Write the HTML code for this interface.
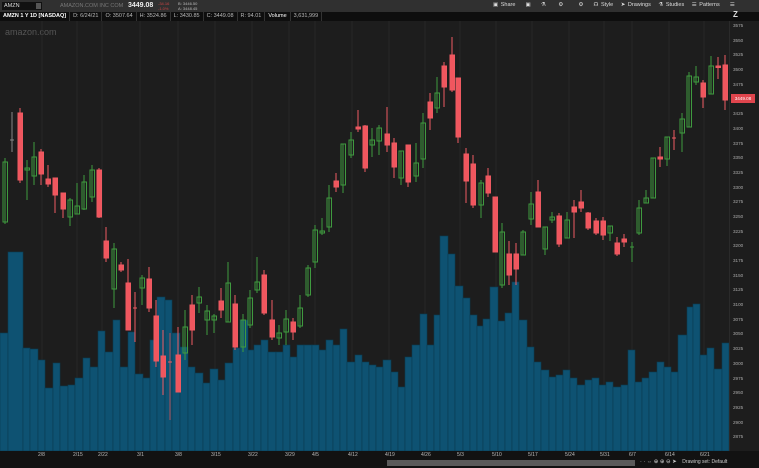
<!DOCTYPE html>
<html><head><meta charset="utf-8"><style>
*{margin:0;padding:0;box-sizing:border-box}
body{width:759px;height:468px;background:#1d1d1d;overflow:hidden;font-family:"Liberation Sans",sans-serif;position:relative}
.top{position:absolute;left:0;top:0;width:759px;height:12px;background:#303030;color:#ccc;font-size:6px}
.row2{position:absolute;left:0;top:12px;width:759px;height:9px;background:#0e0e0e;font-size:5.5px;color:#bbb}
.row2 span{display:inline-block;padding:0 3px;border-right:1px solid #333;line-height:9px}
.ax{position:absolute;left:729px;top:21px;width:30px;height:430px;background:#1d1d1d;border-left:1px solid #2a2a2a}
.bot{position:absolute;left:0;top:451px;width:759px;height:17px;background:#121212}
</style></head><body>
<div class="top">
<div style="position:absolute;left:2px;top:2px;width:40px;height:8px;background:#111;color:#ddd;font-size:5.5px;line-height:8px;padding-left:2px">AMZN<span style="position:absolute;right:1px;top:1px;width:5px;height:6px;background:#555"></span></div>
<div style="position:absolute;left:60px;top:3px;font-size:5.5px;color:#777">AMAZON.COM INC COM</div>
<div style="position:absolute;left:128px;top:2px;font-size:7px;font-weight:bold;color:#eee">3449.08</div>
<div style="position:absolute;left:158px;top:1px;font-size:4px;color:#c44;line-height:5px">-34.16<br>-1.0%</div>
<div style="position:absolute;left:178px;top:1px;font-size:4px;color:#bbb;line-height:5px">B: 3446.50<br>A: 3448.45</div>
<div style="position:absolute;left:493px;top:2px;font-size:5.5px;color:#ddd;word-spacing:1px">▣ Share &nbsp;&nbsp; ▣ &nbsp;&nbsp; ⚗ &nbsp;&nbsp;&nbsp; ⚙ &nbsp;&nbsp;&nbsp;&nbsp; ⚙ &nbsp;&nbsp; ☊ Style &nbsp; ➤ Drawings &nbsp; ⚗ Studies &nbsp; ☰ Patterns &nbsp;&nbsp; ☰</div>
</div>
<div class="row2"><span style="font-weight:bold;color:#fff">AMZN 1 Y 1D [NASDAQ]</span><span>D: 6/24/21</span><span>O: 3507.64</span><span>H: 3524.86</span><span>L: 3430.85</span><span>C: 3449.08</span><span>R: 94.01</span><span style="color:#fff">Volume</span><span>3,631,999</span></div>
<div style="position:absolute;left:5px;top:27px;font-size:9px;color:#555">amazon.com</div>
<svg style="position:absolute;left:0;top:0" width="759" height="468">
<g stroke="#262626" stroke-width="1">
<line x1="42" y1="21" x2="42" y2="451"/><line x1="77" y1="21" x2="77" y2="451"/><line x1="102" y1="21" x2="102" y2="451"/><line x1="140" y1="21" x2="140" y2="451"/><line x1="178" y1="21" x2="178" y2="451"/><line x1="215" y1="21" x2="215" y2="451"/><line x1="252" y1="21" x2="252" y2="451"/><line x1="289" y1="21" x2="289" y2="451"/><line x1="315" y1="21" x2="315" y2="451"/><line x1="352" y1="21" x2="352" y2="451"/><line x1="389" y1="21" x2="389" y2="451"/><line x1="425" y1="21" x2="425" y2="451"/><line x1="460" y1="21" x2="460" y2="451"/><line x1="496" y1="21" x2="496" y2="451"/><line x1="532" y1="21" x2="532" y2="451"/><line x1="569" y1="21" x2="569" y2="451"/><line x1="604" y1="21" x2="604" y2="451"/><line x1="632" y1="21" x2="632" y2="451"/><line x1="669" y1="21" x2="669" y2="451"/><line x1="704" y1="21" x2="704" y2="451"/>
</g>
<g fill="#0e5272" stroke="#0a3c52" stroke-width="0.6">
<rect x="0" y="333" width="8" height="118"/><rect x="8" y="252" width="15" height="199"/><rect x="23" y="348" width="7" height="103"/><rect x="30" y="349" width="8" height="102"/><rect x="38" y="360" width="7" height="91"/><rect x="45" y="388" width="8" height="63"/><rect x="53" y="363" width="7" height="88"/><rect x="60" y="386" width="8" height="65"/><rect x="68" y="385" width="7" height="66"/><rect x="75" y="378" width="8" height="73"/><rect x="83" y="358" width="7" height="93"/><rect x="90" y="367" width="8" height="84"/><rect x="98" y="331" width="7" height="120"/><rect x="105" y="352" width="8" height="99"/><rect x="113" y="320" width="7" height="131"/><rect x="120" y="367" width="8" height="84"/><rect x="128" y="332" width="7" height="119"/><rect x="135" y="374" width="8" height="77"/><rect x="143" y="378" width="7" height="73"/><rect x="150" y="340" width="7" height="111"/><rect x="157" y="297" width="8" height="154"/><rect x="165" y="300" width="7" height="151"/><rect x="172" y="333" width="8" height="118"/><rect x="180" y="347" width="8" height="104"/><rect x="188" y="367" width="7" height="84"/><rect x="195" y="373" width="8" height="78"/><rect x="203" y="383" width="7" height="68"/><rect x="210" y="369" width="8" height="82"/><rect x="218" y="380" width="7" height="71"/><rect x="225" y="363" width="8" height="88"/><rect x="233" y="348" width="7" height="103"/><rect x="240" y="320" width="8" height="131"/><rect x="248" y="350" width="6" height="101"/><rect x="254" y="345" width="7" height="106"/><rect x="261" y="340" width="7" height="111"/><rect x="268" y="352" width="8" height="99"/><rect x="276" y="352" width="7" height="99"/><rect x="283" y="345" width="7" height="106"/><rect x="290" y="357" width="7" height="94"/><rect x="297" y="345" width="7" height="106"/><rect x="304" y="345" width="8" height="106"/><rect x="312" y="345" width="7" height="106"/><rect x="319" y="350" width="7" height="101"/><rect x="326" y="340" width="7" height="111"/><rect x="333" y="345" width="7" height="106"/><rect x="340" y="329" width="7" height="122"/><rect x="347" y="362" width="8" height="89"/><rect x="355" y="355" width="7" height="96"/><rect x="362" y="362" width="7" height="89"/><rect x="369" y="365" width="7" height="86"/><rect x="376" y="367" width="7" height="84"/><rect x="383" y="360" width="8" height="91"/><rect x="391" y="372" width="7" height="79"/><rect x="398" y="387" width="7" height="64"/><rect x="405" y="357" width="7" height="94"/><rect x="412" y="345" width="8" height="106"/><rect x="420" y="314" width="7" height="137"/><rect x="427" y="345" width="7" height="106"/><rect x="434" y="315" width="6" height="136"/><rect x="440" y="236" width="8" height="215"/><rect x="448" y="254" width="7" height="197"/><rect x="455" y="286" width="8" height="165"/><rect x="463" y="298" width="7" height="153"/><rect x="470" y="315" width="7" height="136"/><rect x="477" y="326" width="6" height="125"/><rect x="483" y="319" width="7" height="132"/><rect x="490" y="287" width="8" height="164"/><rect x="498" y="321" width="7" height="130"/><rect x="505" y="313" width="7" height="138"/><rect x="512" y="282" width="7" height="169"/><rect x="519" y="320" width="8" height="131"/><rect x="527" y="347" width="7" height="104"/><rect x="534" y="362" width="7" height="89"/><rect x="541" y="370" width="8" height="81"/><rect x="549" y="377" width="7" height="74"/><rect x="556" y="375" width="7" height="76"/><rect x="563" y="370" width="7" height="81"/><rect x="570" y="378" width="7" height="73"/><rect x="577" y="385" width="8" height="66"/><rect x="585" y="380" width="7" height="71"/><rect x="592" y="378" width="7" height="73"/><rect x="599" y="385" width="7" height="66"/><rect x="606" y="382" width="7" height="69"/><rect x="613" y="387" width="8" height="64"/><rect x="621" y="385" width="7" height="66"/><rect x="628" y="350" width="7" height="101"/><rect x="635" y="382" width="7" height="69"/><rect x="642" y="378" width="7" height="73"/><rect x="649" y="372" width="8" height="79"/><rect x="657" y="362" width="7" height="89"/><rect x="664" y="367" width="7" height="84"/><rect x="671" y="372" width="7" height="79"/><rect x="678" y="335" width="9" height="116"/><rect x="687" y="307" width="6" height="144"/><rect x="693" y="304" width="7" height="147"/><rect x="700" y="355" width="7" height="96"/><rect x="707" y="348" width="7" height="103"/><rect x="714" y="369" width="8" height="82"/><rect x="722" y="343" width="7" height="108"/>
</g>
<g stroke-width="1">
<g stroke="#3f9a3f" fill="none">
<line x1="5" y1="158" x2="5" y2="224"/><rect x="3" y="162" width="4.5" height="60"/>
<line x1="27" y1="160" x2="27" y2="200"/><rect x="25" y="168" width="4.5" height="2"/>
<line x1="34" y1="142" x2="34" y2="185"/><rect x="32" y="157" width="4.5" height="19"/>
<line x1="70" y1="198" x2="70" y2="226"/><rect x="68" y="200" width="4.5" height="17"/>
<line x1="77" y1="183" x2="77" y2="214"/><rect x="75" y="206" width="4.5" height="8"/>
<line x1="84" y1="175" x2="84" y2="210"/><rect x="82" y="182" width="4.5" height="27"/>
<line x1="92" y1="165" x2="92" y2="202"/><rect x="90" y="170" width="4.5" height="27"/>
<line x1="114" y1="243" x2="114" y2="308"/><rect x="112" y="249" width="4.5" height="40"/>
<line x1="142" y1="275" x2="142" y2="305"/><rect x="140" y="278" width="4.5" height="10"/>
<line x1="185" y1="310" x2="185" y2="360"/><rect x="183" y="327" width="4.5" height="26"/>
<line x1="199" y1="287" x2="199" y2="313"/><rect x="197" y="297" width="4.5" height="6"/>
<line x1="207" y1="305" x2="207" y2="335"/><rect x="205" y="311" width="4.5" height="9"/>
<line x1="214" y1="314" x2="214" y2="333"/><rect x="212" y="316" width="4.5" height="4"/>
<line x1="228" y1="262" x2="228" y2="322"/><rect x="226" y="283" width="4.5" height="39"/>
<line x1="243" y1="314" x2="243" y2="352"/><rect x="241" y="320" width="4.5" height="27"/>
<line x1="250" y1="290" x2="250" y2="328"/><rect x="248" y="298" width="4.5" height="27"/>
<line x1="257" y1="257" x2="257" y2="293"/><rect x="255" y="282" width="4.5" height="8"/>
<line x1="279" y1="325" x2="279" y2="345"/><rect x="277" y="333" width="4.5" height="5"/>
<line x1="286" y1="310" x2="286" y2="345"/><rect x="284" y="319" width="4.5" height="13"/>
<line x1="300" y1="295" x2="300" y2="328"/><rect x="298" y="308" width="4.5" height="18"/>
<line x1="308" y1="265" x2="308" y2="297"/><rect x="306" y="268" width="4.5" height="27"/>
<line x1="315" y1="225" x2="315" y2="268"/><rect x="313" y="230" width="4.5" height="32"/>
<line x1="322" y1="218" x2="322" y2="235"/><rect x="320" y="231" width="4.5" height="2"/>
<line x1="329" y1="185" x2="329" y2="232"/><rect x="327" y="198" width="4.5" height="29"/>
<line x1="343" y1="144" x2="343" y2="193"/><rect x="341" y="144" width="4.5" height="41"/>
<line x1="351" y1="132" x2="351" y2="158"/><rect x="349" y="140" width="4.5" height="15"/>
<line x1="372" y1="128" x2="372" y2="157"/><rect x="370" y="140" width="4.5" height="5"/>
<line x1="379" y1="125" x2="379" y2="155"/><rect x="377" y="128" width="4.5" height="13"/>
<line x1="401" y1="151" x2="401" y2="185"/><rect x="399" y="151" width="4.5" height="27"/>
<line x1="416" y1="143" x2="416" y2="182"/><rect x="414" y="163" width="4.5" height="13"/>
<line x1="423" y1="113" x2="423" y2="168"/><rect x="421" y="123" width="4.5" height="36"/>
<line x1="437" y1="77" x2="437" y2="113"/><rect x="435" y="93" width="4.5" height="15"/>
<line x1="481" y1="180" x2="481" y2="218"/><rect x="479" y="183" width="4.5" height="22"/>
<line x1="502" y1="223" x2="502" y2="288"/><rect x="500" y="232" width="4.5" height="53"/>
<line x1="523" y1="230" x2="523" y2="255"/><rect x="521" y="232" width="4.5" height="23"/>
<line x1="531" y1="192" x2="531" y2="225"/><rect x="529" y="204" width="4.5" height="15"/>
<line x1="545" y1="227" x2="545" y2="255"/><rect x="543" y="227" width="4.5" height="22"/>
<line x1="552" y1="212" x2="552" y2="223"/><rect x="550" y="217" width="4.5" height="3"/>
<line x1="567" y1="212" x2="567" y2="238"/><rect x="565" y="220" width="4.5" height="18"/>
<line x1="610" y1="226" x2="610" y2="241"/><rect x="608" y="226" width="4.5" height="7"/>
<line x1="632" y1="242" x2="632" y2="262"/><line x1="630" y1="247" x2="634" y2="247"/>
<line x1="639" y1="200" x2="639" y2="235"/><rect x="637" y="208" width="4.5" height="25"/>
<line x1="646" y1="190" x2="646" y2="203"/><rect x="644" y="198" width="4.5" height="5"/>
<line x1="653" y1="158" x2="653" y2="198"/><rect x="651" y="158" width="4.5" height="40"/>
<line x1="667" y1="137" x2="667" y2="166"/><rect x="665" y="137" width="4.5" height="22"/>
<line x1="682" y1="113" x2="682" y2="152"/><rect x="680" y="119" width="4.5" height="14"/>
<line x1="689" y1="72" x2="689" y2="127"/><rect x="687" y="76" width="4.5" height="51"/>
<line x1="696" y1="66" x2="696" y2="85"/><rect x="694" y="77" width="4.5" height="5"/>
<line x1="711" y1="56" x2="711" y2="94"/><rect x="709" y="66" width="4.5" height="28"/>
</g>
<g stroke="#ee5a62" fill="#f0565e">
<line x1="12" y1="112" x2="12" y2="152" stroke="#888"/><line x1="10" y1="140" x2="14" y2="140" stroke="#888"/>
<line x1="20" y1="108" x2="20" y2="183"/><rect x="18" y="113" width="4.5" height="67"/>
<line x1="41" y1="149" x2="41" y2="185"/><rect x="39" y="152" width="4.5" height="22"/>
<line x1="48" y1="165" x2="48" y2="187"/><rect x="46" y="179" width="4.5" height="5"/>
<line x1="55" y1="178" x2="55" y2="213"/><rect x="53" y="178" width="4.5" height="17"/>
<line x1="63" y1="193" x2="63" y2="218"/><rect x="61" y="193" width="4.5" height="16"/>
<line x1="99" y1="168" x2="99" y2="218"/><rect x="97" y="170" width="4.5" height="47"/>
<line x1="106" y1="227" x2="106" y2="262"/><rect x="104" y="241" width="4.5" height="17"/>
<line x1="121" y1="262" x2="121" y2="272"/><rect x="119" y="265" width="4.5" height="5"/>
<line x1="128" y1="259" x2="128" y2="330"/><rect x="126" y="283" width="4.5" height="47"/>
<line x1="135" y1="292" x2="135" y2="342"/><line x1="133" y1="308" x2="137" y2="308"/>
<line x1="149" y1="267" x2="149" y2="312"/><rect x="147" y="279" width="4.5" height="29"/>
<line x1="156" y1="300" x2="156" y2="367"/><rect x="154" y="316" width="4.5" height="45"/>
<line x1="163" y1="330" x2="163" y2="395"/><rect x="161" y="356" width="4.5" height="21"/>
<line x1="170" y1="333" x2="170" y2="420" stroke="#b05058"/><line x1="168" y1="362" x2="172" y2="362"/>
<line x1="178" y1="327" x2="178" y2="392"/><rect x="176" y="355" width="4.5" height="37"/>
<line x1="192" y1="295" x2="192" y2="345"/><rect x="190" y="305" width="4.5" height="25"/>
<line x1="221" y1="288" x2="221" y2="318"/><rect x="219" y="301" width="4.5" height="9"/>
<line x1="235" y1="295" x2="235" y2="350"/><rect x="233" y="304" width="4.5" height="43"/>
<line x1="264" y1="270" x2="264" y2="315"/><rect x="262" y="275" width="4.5" height="38"/>
<line x1="272" y1="300" x2="272" y2="340"/><rect x="270" y="320" width="4.5" height="17"/>
<line x1="293" y1="318" x2="293" y2="340"/><rect x="291" y="322" width="4.5" height="10"/>
<line x1="336" y1="173" x2="336" y2="192"/><rect x="334" y="181" width="4.5" height="6"/>
<line x1="358" y1="110" x2="358" y2="132"/><rect x="356" y="127" width="4.5" height="2"/>
<line x1="365" y1="125" x2="365" y2="172"/><rect x="363" y="126" width="4.5" height="42"/>
<line x1="387" y1="107" x2="387" y2="152"/><rect x="385" y="134" width="4.5" height="11"/>
<line x1="394" y1="138" x2="394" y2="178"/><rect x="392" y="143" width="4.5" height="24"/>
<line x1="408" y1="145" x2="408" y2="187"/><rect x="406" y="145" width="4.5" height="37"/>
<line x1="430" y1="93" x2="430" y2="130"/><rect x="428" y="102" width="4.5" height="16"/>
<line x1="444" y1="62" x2="444" y2="107"/><rect x="442" y="66" width="4.5" height="21"/>
<line x1="452" y1="37" x2="452" y2="92"/><rect x="450" y="55" width="4.5" height="35"/>
<line x1="458" y1="78" x2="458" y2="143"/><rect x="456" y="78" width="4.5" height="59"/>
<line x1="466" y1="148" x2="466" y2="203"/><rect x="464" y="154" width="4.5" height="27"/>
<line x1="473" y1="155" x2="473" y2="208"/><rect x="471" y="164" width="4.5" height="41"/>
<line x1="488" y1="168" x2="488" y2="197"/><rect x="486" y="176" width="4.5" height="17"/>
<line x1="495" y1="197" x2="495" y2="252"/><rect x="493" y="197" width="4.5" height="55"/>
<line x1="509" y1="241" x2="509" y2="285"/><rect x="507" y="254" width="4.5" height="21"/>
<line x1="516" y1="243" x2="516" y2="285"/><rect x="514" y="254" width="4.5" height="15"/>
<line x1="538" y1="180" x2="538" y2="227"/><rect x="536" y="192" width="4.5" height="35"/>
<line x1="559" y1="213" x2="559" y2="247"/><rect x="557" y="216" width="4.5" height="28"/>
<line x1="574" y1="200" x2="574" y2="238"/><rect x="572" y="207" width="4.5" height="5"/>
<line x1="581" y1="190" x2="581" y2="212"/><rect x="579" y="202" width="4.5" height="6"/>
<line x1="588" y1="212" x2="588" y2="230"/><rect x="586" y="213" width="4.5" height="15"/>
<line x1="596" y1="218" x2="596" y2="235"/><rect x="594" y="221" width="4.5" height="12"/>
<line x1="603" y1="217" x2="603" y2="240"/><rect x="601" y="221" width="4.5" height="14"/>
<line x1="617" y1="237" x2="617" y2="256"/><rect x="615" y="243" width="4.5" height="11"/>
<line x1="624" y1="234" x2="624" y2="247"/><rect x="622" y="239" width="4.5" height="3"/>
<line x1="660" y1="147" x2="660" y2="167"/><rect x="658" y="157" width="4.5" height="2"/>
<line x1="674" y1="130" x2="674" y2="150"/><line x1="672" y1="138" x2="676" y2="138"/>
<line x1="703" y1="80" x2="703" y2="108"/><rect x="701" y="83" width="4.5" height="14"/>
<line x1="718" y1="57" x2="718" y2="79"/><rect x="716" y="66" width="4.5" height="1.5"/>
<line x1="725" y1="55" x2="725" y2="110"/><rect x="723" y="65" width="4.5" height="35"/>
</g>
</g>
</svg>
<div class="ax"></div>
<div style="position:absolute;left:733px;top:10px;font-size:8px;color:#ddd;font-weight:bold">Z</div>
<div style="position:absolute;left:733px;top:19px;font-size:4.6px;color:#aaa;line-height:14.68px">3575<br>3550<br>3525<br>3500<br>3475<br>&nbsp;<br>3425<br>3400<br>3375<br>3350<br>3325<br>3300<br>3275<br>3250<br>3225<br>3200<br>3175<br>3150<br>3125<br>3100<br>3075<br>3050<br>3025<br>3000<br>2975<br>2950<br>2925<br>2900<br>2875</div>
<div style="position:absolute;left:731px;top:94px;width:24px;height:9px;background:#e0454d;color:#fff;font-size:4.6px;line-height:9px;text-align:center">3449.08</div>
<div class="bot"></div>
<div style="position:absolute;left:0;top:452px;width:730px;height:7px;font-size:5px;color:#bbb">
<span style="position:absolute;left:38px">2/8</span><span style="position:absolute;left:73px">2/15</span><span style="position:absolute;left:98px">2/22</span><span style="position:absolute;left:137px">3/1</span><span style="position:absolute;left:175px">3/8</span><span style="position:absolute;left:211px">3/15</span><span style="position:absolute;left:248px">3/22</span><span style="position:absolute;left:285px">3/29</span><span style="position:absolute;left:312px">4/5</span><span style="position:absolute;left:348px">4/12</span><span style="position:absolute;left:385px">4/19</span><span style="position:absolute;left:421px">4/26</span><span style="position:absolute;left:457px">5/3</span><span style="position:absolute;left:492px">5/10</span><span style="position:absolute;left:528px">5/17</span><span style="position:absolute;left:565px">5/24</span><span style="position:absolute;left:600px">5/31</span><span style="position:absolute;left:629px">6/7</span><span style="position:absolute;left:665px">6/14</span><span style="position:absolute;left:700px">6/21</span></div>
<div style="position:absolute;left:387px;top:460px;width:248px;height:6px;background:#5a5a5a"></div>
<div style="position:absolute;left:640px;top:459px;font-size:5.5px;color:#ccc">· · ⇔ ⊕ ⊕ ⊖ ➤ <span style="font-size:5px;margin-left:4px">Drawing set: Default</span></div>
</body></html>
